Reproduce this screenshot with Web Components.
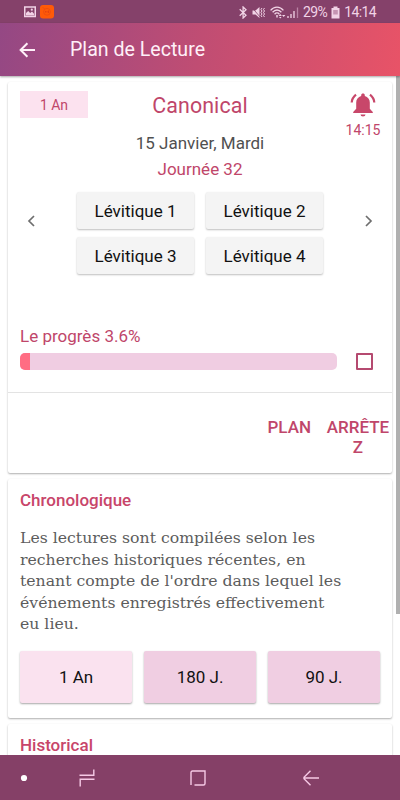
<!DOCTYPE html>
<html lang="fr">
<head>
<meta charset="utf-8">
<title>Plan de Lecture</title>
<style>
    body {
        margin: 0;
        font-family: Roboto, "Liberation Sans", sans-serif;
        color: #111;
        overflow: hidden;
    }
</style>
</head>
<body>
<reading-app>
    <status-bar slot="status" battery="29%" time="14:14"></status-bar>
    <app-toolbar slot="toolbar">Plan de Lecture</app-toolbar>
    <current-plan duration="1 An" alarm="14:15" percent="3.6">
        <span slot="title">Canonical</span>
        <span slot="date">15 Janvier, Mardi</span>
        <span slot="day">Journée 32</span>
        <plan-button>Lévitique 1</plan-button>
        <plan-button>Lévitique 2</plan-button>
        <plan-button>Lévitique 3</plan-button>
        <plan-button>Lévitique 4</plan-button>
    </current-plan>
    <plan-card>
        <span slot="title">Chronologique</span>
        <span slot="text">Les lectures sont compilées selon les<br>recherches historiques récentes, en<br>tenant compte de l'ordre dans lequel les<br>événements enregistrés effectivement<br>eu lieu.</span>
        <plan-button kind="light">1 An</plan-button>
        <plan-button kind="pink">180 J.</plan-button>
        <plan-button kind="pink">90 J.</plan-button>
    </plan-card>
    <plan-card>
        <span slot="title">Historical</span>
    </plan-card>
    <nav-bar slot="nav"></nav-bar>
</reading-app>

<script>
function define(name, html, setup) {
    var template = document.createElement("template");
    template.innerHTML = html;
    customElements.define(name, class extends HTMLElement {
        constructor(){
            super();
            this.attachShadow({mode:"open"});
            this.shadowRoot.appendChild(template.content.cloneNode(true));
        }

        connectedCallback(){
            if (setup) setup(this, this.shadowRoot);
        }
    });
}

define("reading-app", `
<style>
    :host {
        display: flex;
        flex-direction: column;
        height: 800px;
        width: 400px;
        background: #fff;
        overflow: hidden;
    }
    main {
        flex: 1;
        min-height: 0;
        display: flex;
        overflow: hidden;
    }
    #list {
        flex: 1;
        display: flex;
        flex-direction: column;
        gap: 6px;
        padding: 6px 4px 0 8px;
    }
    #thumb {
        width: 4px;
        height: 538px;
        background: #b0b0b0;
    }
</style>
<slot name="status"></slot>
<slot name="toolbar"></slot>
<main>
    <div id="list"><slot></slot></div>
    <div id="thumb"></div>
</main>
<slot name="nav"></slot>
`);

define("status-bar", `
<style>
    :host {
        display: flex;
        align-items: center;
        height: 23px;
        flex: none;
        box-sizing: border-box;
        padding: 1px 24px 0 24px;
        background: #85416a;
        color: #f1d3e6;
        font-size: 14px;
        letter-spacing: -0.6px;
    }
    svg { display: block; flex: none; }
    #left { display: flex; gap: 4px; flex: 1; }
    #bt { margin-right: 5px; }
    #mute { margin-right: 5px; }
    #wifi { margin-right: 1px; }
    #signal { margin-right: 4px; }
    #bat { margin: 0 4px; }
</style>
<div id="left">
    <svg width="12" height="14" viewBox="0 0 12 14">
        <rect x=".75" y="2" width="10.5" height="9.5" fill="#85416a" stroke="#f1d3e6" stroke-width="1.5"/>
        <path d="M2 10.5V8l2.2-2 2 2L8 6.6 10 8.8v1.7z" fill="#f1d3e6"/>
        <circle cx="7.8" cy="4.7" r="1.1" fill="#f1d3e6"/>
    </svg>
    <svg width="14" height="14" viewBox="0 0 14 14">
        <rect width="14" height="13.5" rx="3" fill="#ff5a08"/>
        <circle cx="7" cy="6.8" r="3.4" fill="none" stroke="#ec4a0e" stroke-width=".8"/>
        <path d="M5.5 6v1.5M7 6v1.5M8.500 5.500V8M3 2.5l1 1" stroke="#df3d12" stroke-width=".8"/>
    </svg>
</div>
<svg id="bt" width="8" height="13" viewBox="0 0 8 13">
    <path d="M.7 3.3 7 9.2 4.1 12V1L7 3.8.7 9.7" fill="none" stroke="#f1d3e6" stroke-width="1.3"/>
</svg>
<svg id="mute" width="13" height="13" viewBox="0 0 13 13">
    <path d="M.5 4.5h3L7.5 1v11L3.5 8.5h-3z" fill="#f1d3e6"/>
    <path d="M0 1.5 8.5 11.5" stroke="#85416a" stroke-width=".8"/>
    <path d="m10 2-1 1.5 1 1.5-1 1.5 1 1.5-1 1.5 1 1.5M12.5 2l-1 1.5 1 1.5-1 1.5 1 1.5-1 1.5 1 1.5" fill="none" stroke="#f1d3e6"/>
</svg>
<svg id="wifi" width="16" height="13" viewBox="0 0 16 13">
    <path d="M.6 4.4C4-.1 10-.1 13.4 4.4M2.6 6.3c2.7-3.1 6.1-3.1 8.8 0M4.6 8.2c1.5-1.7 3.3-1.7 4.8 0" fill="none" stroke="#f1d3e6" stroke-width="1.3"/>
    <path d="M7 9v2.5" stroke="#f1d3e6" stroke-width="1.5"/>
    <path d="m8.5 10 1.7-2 1.7 2zm3.5-1h3.4L13.7 11zM9 11h2.5l-1.2 1.5z" fill="#f1d3e6"/>
</svg>
<svg id="signal" width="12" height="13" viewBox="0 0 12 13">
    <path d="M1 10v2M4 8v4M7 5v7" stroke="#f1d3e6" stroke-width="1.3"/>
    <path d="M10.5 1.5V12" stroke="#b982a4" stroke-width="1.3"/>
</svg>
<span id="level"></span>
<svg id="bat" width="9" height="13" viewBox="0 0 9 13">
    <path d="M.5 2h2V.5h4V2h2v10.5h-8z" fill="#f1d3e6"/>
    <path d="M2.2 4h4.6v4.5H2.2z" fill="#c594b2"/>
</svg>
<span id="time"></span>
`, function (el, root) {
    root.querySelector("#level").textContent = el.getAttribute("battery");
    root.querySelector("#time").textContent = el.getAttribute("time");
});

define("app-toolbar", `
<style>
    :host {
        display: flex;
        align-items: center;
        gap: 35px;
        height: 53px;
        flex: none;
        box-sizing: border-box;
        padding: 0 19px;
        background: linear-gradient(100deg, #944884 0%, #c04d73 50%, #e85367 100%);
        box-shadow: 0 1px 2px rgba(0,0,0,.35);
        color: #fff0f8;
        font-size: 19.6px;
        z-index: 1;
    }
    svg { display: block; }
</style>
<svg width="16" height="16" viewBox="0 0 16 16">
    <path d="M8.4 1.2 1.6 8l6.8 6.8M1.8 8H16" fill="none" stroke="#fff0f8" stroke-width="2"/>
</svg>
<slot></slot>
`);

define("plan-button", `
<style>
    :host {
        display: flex;
        align-items: center;
        justify-content: center;
        height: 37px;
        background: #f4f4f4;
        border-radius: 2px;
        box-shadow: 0 1px 2px rgba(0,0,0,.26);
        font-size: 17px;
        color: #111;
    }
    :host([kind]) {
        height: 52px;
        background: #f0cee2;
        box-shadow: 0 1px 2px rgba(0,0,0,.35);
    }
    :host([kind="light"]) { background: #fae2ef; }
</style>
<slot></slot>
`);

define("progress-bar", `
<style>
    :host {
        display: block;
        height: 17px;
        border-radius: 5px;
        background: #f0cde2;
        overflow: hidden;
    }
    div {
        height: 100%;
        min-width: 9.5px;
        background: #ff6d83;
    }
</style>
<div></div>
`, function (el, root) {
    root.querySelector("div").style.width = (el.getAttribute("value") * 0.83) + "%";
});

define("current-plan", `
<style>
    :host {
        display: flex;
        flex-direction: column;
        flex: none;
        height: 391px;
        box-sizing: border-box;
        border-radius: 2px;
        background: #fff;
        box-shadow: 0 1px 2px rgba(0,0,0,.32);
        color: #c0466a;
    }
    svg { display: block; }
    #head {
        display: grid;
        grid-template-columns: 68px 1fr 68px;
        height: 110px;
        padding: 9px 12px 0;
        box-sizing: border-box;
    }
    #tag {
        height: 27px;
        line-height: 28px;
        background: #fce2ef;
        font-size: 14px;
        text-align: center;
    }
    #middle { text-align: center; font-size: 17px; }
    #title { font-size: 21.4px; line-height: 30px; letter-spacing: 0.1px; }
    #date { line-height: 26px; margin-top: 9px; color: #505050; }
    #day { line-height: 26px; }
    #alarm {
        display: flex;
        flex-direction: column;
        align-items: center;
        padding: 2px 0 0 34px;
        gap: 5px;
        font-size: 14px;
        line-height: 17px;
    }
    #week {
        display: flex;
        justify-content: space-between;
        padding: 0 19px;
        height: 82px;
    }
    /* arrows sit a little above the middle of the two rows */
    .arrow { margin-top: 23px; }
    #grid {
        display: grid;
        grid-template-columns: 117px 117px;
        gap: 8px 12px;
        width: 246px;
    }
    #progress {
        display: flex;
        flex-direction: column;
        padding: 0 19px 0 12px;
        margin-top: 51px;
        height: 67px;
        border-bottom: 1px solid #e3e3e3;
    }
    #label { font-size: 17px; line-height: 22px; }
    #row { display: flex; gap: 19px; margin-top: 6px; }
    #row progress-bar { width: 317px; }
    #check {
        width: 17px;
        height: 17px;
        box-sizing: border-box;
        border: 2px solid #b54a70;
        border-radius: 1px;
    }
    #actions {
        display: flex;
        justify-content: flex-end;
        gap: 15px;
        padding: 24px 2px 0 0;
        font-size: 17px;
        font-weight: 500;
        line-height: 20px;
        text-align: center;
    }
    #stop { width: 64px; }
</style>
<div id="head">
    <div id="tag"></div>
    <div id="middle">
        <div id="title"><slot name="title"></slot></div>
        <div id="date"><slot name="date"></slot></div>
        <div id="day"><slot name="day"></slot></div>
    </div>
    <div id="alarm">
        <svg width="26" height="24" viewBox="0 0 26 24">
            <path d="M13 .5c1.100 0 1.800.7 1.800 1.700v.7c3.200.8 5 3.400 5 6.600v6.300l3 3.200v1H3.200v-1l3-3.200V9.500c0-3.200 1.800-5.800 5-6.600v-.7C11.200 1.200 11.900.5 13 .5zM10.500 21.500h5a2.500 2 0 0 1-5 0z" fill="#c8476a"/>
            <path d="M1.700 9.500Q2 5 6 1.700M24.300 9.500Q24 5 20 1.700" fill="none" stroke="#c8476a" stroke-width="2.200"/>
        </svg>
        <span id="hour"></span>
    </div>
</div>
<div id="week">
    <svg class="arrow" width="8" height="12" viewBox="0 0 8 12">
        <path d="M7 1 2 6l5 5" fill="none" stroke="#6e6e6e" stroke-width="1.7"/>
    </svg>
    <div id="grid"><slot></slot></div>
    <svg class="arrow" width="8" height="12" viewBox="0 0 8 12">
        <path d="m1 1 5 5-5 5" fill="none" stroke="#6e6e6e" stroke-width="1.7"/>
    </svg>
</div>
<div id="progress">
    <div id="label"></div>
    <div id="row">
        <progress-bar></progress-bar>
        <div id="check"></div>
    </div>
</div>
<div id="actions">
    <span>PLAN</span>
    <span id="stop">ARRÊTE<br>Z</span>
</div>
`, function (el, root) {
    var percent = el.getAttribute("percent");
    root.querySelector("#tag").textContent = el.getAttribute("duration");
    root.querySelector("#hour").textContent = el.getAttribute("alarm");
    root.querySelector("#label").textContent = "Le progrès " + percent + "%";
    root.querySelector("progress-bar").setAttribute("value", percent);
});

define("plan-card", `
<style>
    :host {
        display: flex;
        flex-direction: column;
        flex: none;
        height: 239px;
        box-sizing: border-box;
        padding: 10px 12px 0;
        border-radius: 2px;
        background: #fff;
        box-shadow: 0 1px 2px rgba(0,0,0,.32);
    }
    #title {
        color: #c8456a;
        font-size: 17px;
        font-weight: 500;
        line-height: 22px;
    }
    #text {
        margin-top: 16px;
        height: 108px;
        font-family: "Roboto Slab", "DejaVu Serif", serif;
        font-size: 15.7px;
        line-height: 21.6px;
        color: #5c5c5c;
        white-space: nowrap;
    }
    #buttons {
        display: grid;
        grid-template-columns: 1fr 1fr 1fr;
        gap: 12px;
        margin-top: 16px;
    }
</style>
<div id="title"><slot name="title"></slot></div>
<div id="text"><slot name="text"></slot></div>
<div id="buttons"><slot></slot></div>
`);

define("nav-bar", `
<style>
    :host {
        display: flex;
        align-items: center;
        height: 45px;
        flex: none;
        box-sizing: border-box;
        padding: 1px 0 0 20px;
        background: #854067;
        z-index: 1;
    }
    svg { display: block; }
    #recent { margin-left: 51px; }
    #home { margin-left: 95px; }
    #back { margin-left: 97px; }
</style>
<svg width="8" height="8" viewBox="0 0 8 8"><circle cx="4" cy="4" r="3.1" fill="#fff"/></svg>
<svg id="recent" width="16" height="18" viewBox="0 0 16 18">
    <path d="M14.8 .5v5.800H.5M15.5 10.300H1.200V17.5" fill="none" stroke="#f6c9e5" stroke-width="1.4"/>
</svg>
<svg id="home" width="16" height="16" viewBox="0 0 16 16">
    <path d="M1 10V2.5Q1 1 2.5 1H15v12.5q0 1.5-1.5 1.5H4.5M1 9v6" fill="none" stroke="#f6c9e5" stroke-width="1.4"/>
</svg>
<svg id="back" width="16" height="16" viewBox="0 0 16 16">
    <path d="M7.5 .7 1 7.300V8.700l6.500 6.600M1 8h15" fill="none" stroke="#f6c9e5" stroke-width="1.4"/>
</svg>
`);
</script>
</body>
</html>
